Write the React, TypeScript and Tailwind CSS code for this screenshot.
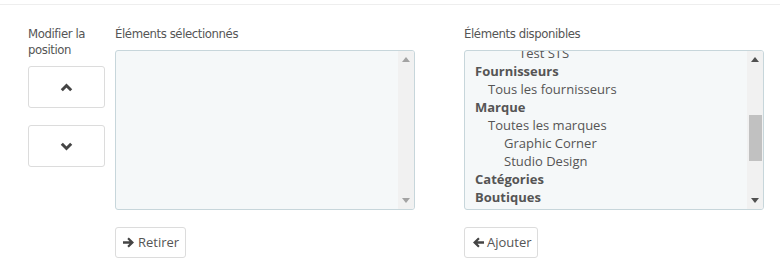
import React from 'react';

type Item = { label: string; level: number; bold?: boolean };

const available: Item[] = [
  { label: 'Test STS', level: 3 },
  { label: 'Fournisseurs', level: 0, bold: true },
  { label: 'Tous les fournisseurs', level: 1 },
  { label: 'Marque', level: 0, bold: true },
  { label: 'Toutes les marques', level: 1 },
  { label: 'Graphic Corner', level: 2 },
  { label: 'Studio Design', level: 2 },
  { label: 'Catégories', level: 0, bold: true },
  { label: 'Boutiques', level: 0, bold: true },
];

const indent = ['pl-[10px]', 'pl-[23px]', 'pl-[39px]', 'pl-[54px]'];

const Triangle = ({ up, color }: { up?: boolean; color: string }) => (
  <svg width="8" height="5" viewBox="0 0 8 5" className="block">
    <polygon points={up ? '0,5 8,5 4,0' : '0,0 8,0 4,5'} fill={color} />
  </svg>
);

const Scrollbar = ({ active }: { active?: boolean }) => {
  const c = active ? '#505050' : '#a3a3a3';
  return (
    <div className="w-[16px] bg-[#f1f1f1] flex flex-col">
      <div className="h-[17px] flex items-center justify-center">
        <Triangle up color={c} />
      </div>
      <div className="flex-1 flex flex-col items-center">
        {active && <div className="mt-[47px] w-[13px] h-[46px] bg-[#c1c1c1]" />}
      </div>
      <div className="h-[17px] flex items-center justify-center">
        <Triangle color={c} />
      </div>
    </div>
  );
};

const Chevron = ({ up }: { up?: boolean }) => (
  <svg width="13" height="9" viewBox="0 0 13 9">
    <polyline
      points={up ? '1.8,7.2 6.5,2.5 11.2,7.2' : '1.8,1.8 6.5,6.5 11.2,1.8'}
      fill="none"
      stroke="#444"
      strokeWidth="3"
    />
  </svg>
);

const Arrow = ({ left }: { left?: boolean }) => (
  <svg width="12" height="11" viewBox="0 0 12 11" className={left ? 'rotate-180' : ''}>
    <path d="M0 4.2 H6.5 L4.3 2 L5.8 0.5 L11 5.5 L5.8 10.5 L4.3 9 L6.5 6.8 H0 Z" fill="#444" />
  </svg>
);

const labelCls =
  "text-[13px] leading-[16px] tracking-[-0.4px] text-[#555] font-['DejaVu_Sans_Condensed','DejaVu_Sans',sans-serif] [font-stretch:condensed]";

export default function App() {
  return (
    <div className="w-[780px] h-[268px] bg-white font-['Open_Sans',sans-serif] text-[#555]">
      <div className="h-[4px]" />
      <div className="border-t border-[#eee] pt-[21px] flex">
        {/* position column */}
        <div className="ml-[28px] w-[77px] flex flex-col">
          <div className={labelCls}>Modifier la<br />position</div>
          <button className="mt-[8px] h-[42px] border border-[#dcdcdc] rounded-[3px] bg-white flex items-center justify-center">
            <Chevron up />
          </button>
          <button className="mt-[17px] h-[42px] border border-[#dcdcdc] rounded-[3px] bg-white flex items-center justify-center">
            <Chevron />
          </button>
        </div>

        {/* selected */}
        <div className="ml-[10px] w-[300px] flex flex-col">
          <div className={labelCls}>Éléments sélectionnés</div>
          <div className="mt-[8px] h-[160px] border border-[#c7d6db] rounded-[3px] bg-[#f5f8f9] flex justify-end overflow-hidden">
            <Scrollbar />
          </div>
          <button className="mt-[17px] self-start h-[31px] pl-[7px] pr-[6px] border border-[#dcdcdc] rounded-[3px] bg-white flex items-center gap-[3px] text-[13px] text-[#555]">
            <Arrow />
            Retirer
          </button>
        </div>

        {/* available */}
        <div className="ml-[49px] w-[300px] flex flex-col">
          <div className={labelCls}>Éléments disponibles</div>
          <div className="mt-[8px] h-[160px] border border-[#c7d6db] rounded-[3px] bg-[#f5f8f9] flex overflow-hidden">
            <div className="flex-1 overflow-hidden">
              <div className="-mt-[7px]">
                {available.map((it) => (
                  <div
                    key={it.label}
                    className={`h-[18px] leading-[18px] text-[13px] text-[#555] ${indent[it.level]} ${it.bold ? 'font-bold' : ''}`}
                  >
                    {it.label}
                  </div>
                ))}
              </div>
            </div>
            <Scrollbar active />
          </div>
          <button className="mt-[17px] self-start h-[31px] pl-[7px] pr-[5px] border border-[#dcdcdc] rounded-[3px] bg-white flex items-center gap-[3px] text-[13px] text-[#555]">
            <Arrow left />
            Ajouter
          </button>
        </div>
      </div>
    </div>
  );
}
